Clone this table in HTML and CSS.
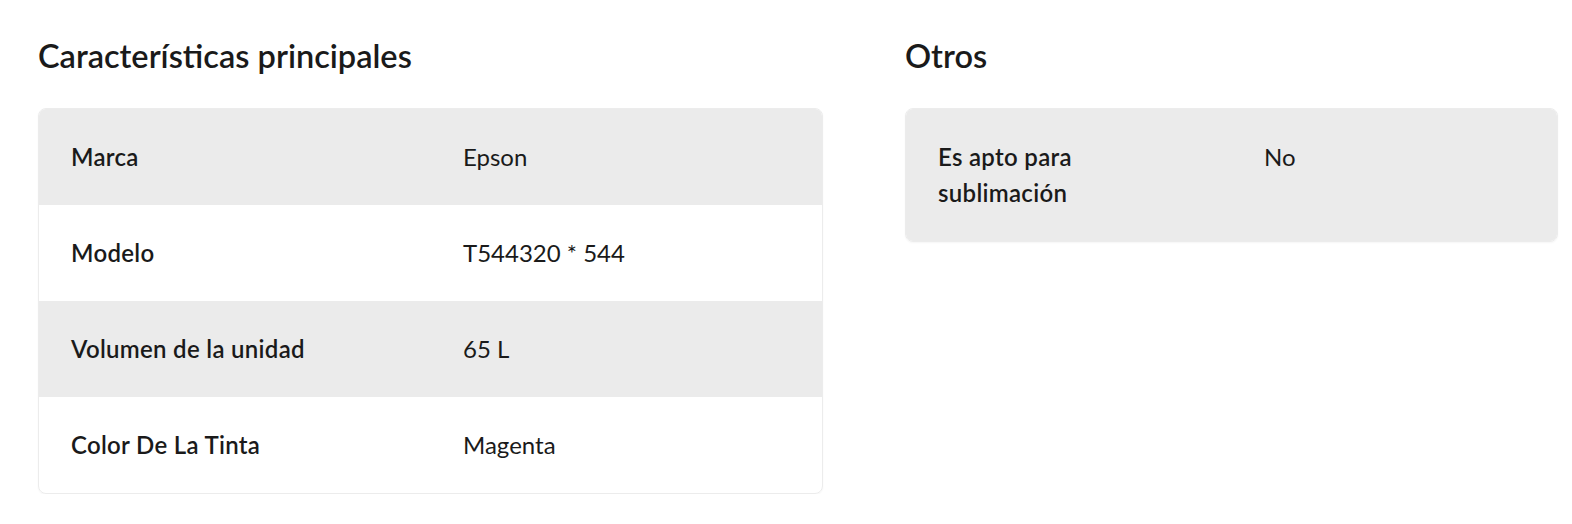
FILE: index.html
```html
<!DOCTYPE html>
<html lang="es">
<head>
<meta charset="utf-8">
<link rel="stylesheet" href="styles.css">
</head>
<body>
<div class="specs">
  <section class="group group-main">
    <h2 class="group-title">Características principales</h2>
    <div class="table">
      <div class="row shaded"><div class="label">Marca</div><div class="value">Epson</div></div>
      <div class="row"><div class="label">Modelo</div><div class="value">T544320 * 544</div></div>
      <div class="row shaded"><div class="label">Volumen de la unidad</div><div class="value">65 L</div></div>
      <div class="row"><div class="label">Color De La Tinta</div><div class="value">Magenta</div></div>
    </div>
  </section>
  <section class="group group-other">
    <h2 class="group-title">Otros</h2>
    <div class="table">
      <div class="row shaded"><div class="label"><span class="wrap">Es apto para sublimación</span></div><div class="value">No</div></div>
    </div>
  </section>
</div>
</body>
</html>
```
FILE: styles.css
```css
* { box-sizing: border-box; }
html, body { margin: 0; background: #fff; }
body {
  font-family: Lato, "Noto Sans", sans-serif;
  color: #1a1a1a;
}
.specs {
  display: grid;
  grid-template-columns: 785px 653px;
  column-gap: 82px;
  padding: 36px 0 0 38px;
  align-items: start;
}
.group-title {
  margin: 0 0 32px;
  font-size: 32.5px;
  line-height: 40px;
  font-weight: 600;
  letter-spacing: 0;
}
.table {
  border: 1px solid #ececec;
  border-radius: 8px;
  overflow: hidden;
  box-shadow: 0 1px 2px rgba(0,0,0,0.04);
}
.row {
  display: grid;
  padding: 30px 32px;
  font-size: 24px;
  line-height: 36px;
}
.group-main .row { grid-template-columns: 392px 1fr; }
.group-other .row { grid-template-columns: 326px 1fr; }
.row.shaded { background: #ebebeb; }
.label { font-weight: 600; padding-right: 24px; letter-spacing: 0.3px; }
.value { font-weight: 400; }
.wrap { display: block; max-width: 170px; }
```
